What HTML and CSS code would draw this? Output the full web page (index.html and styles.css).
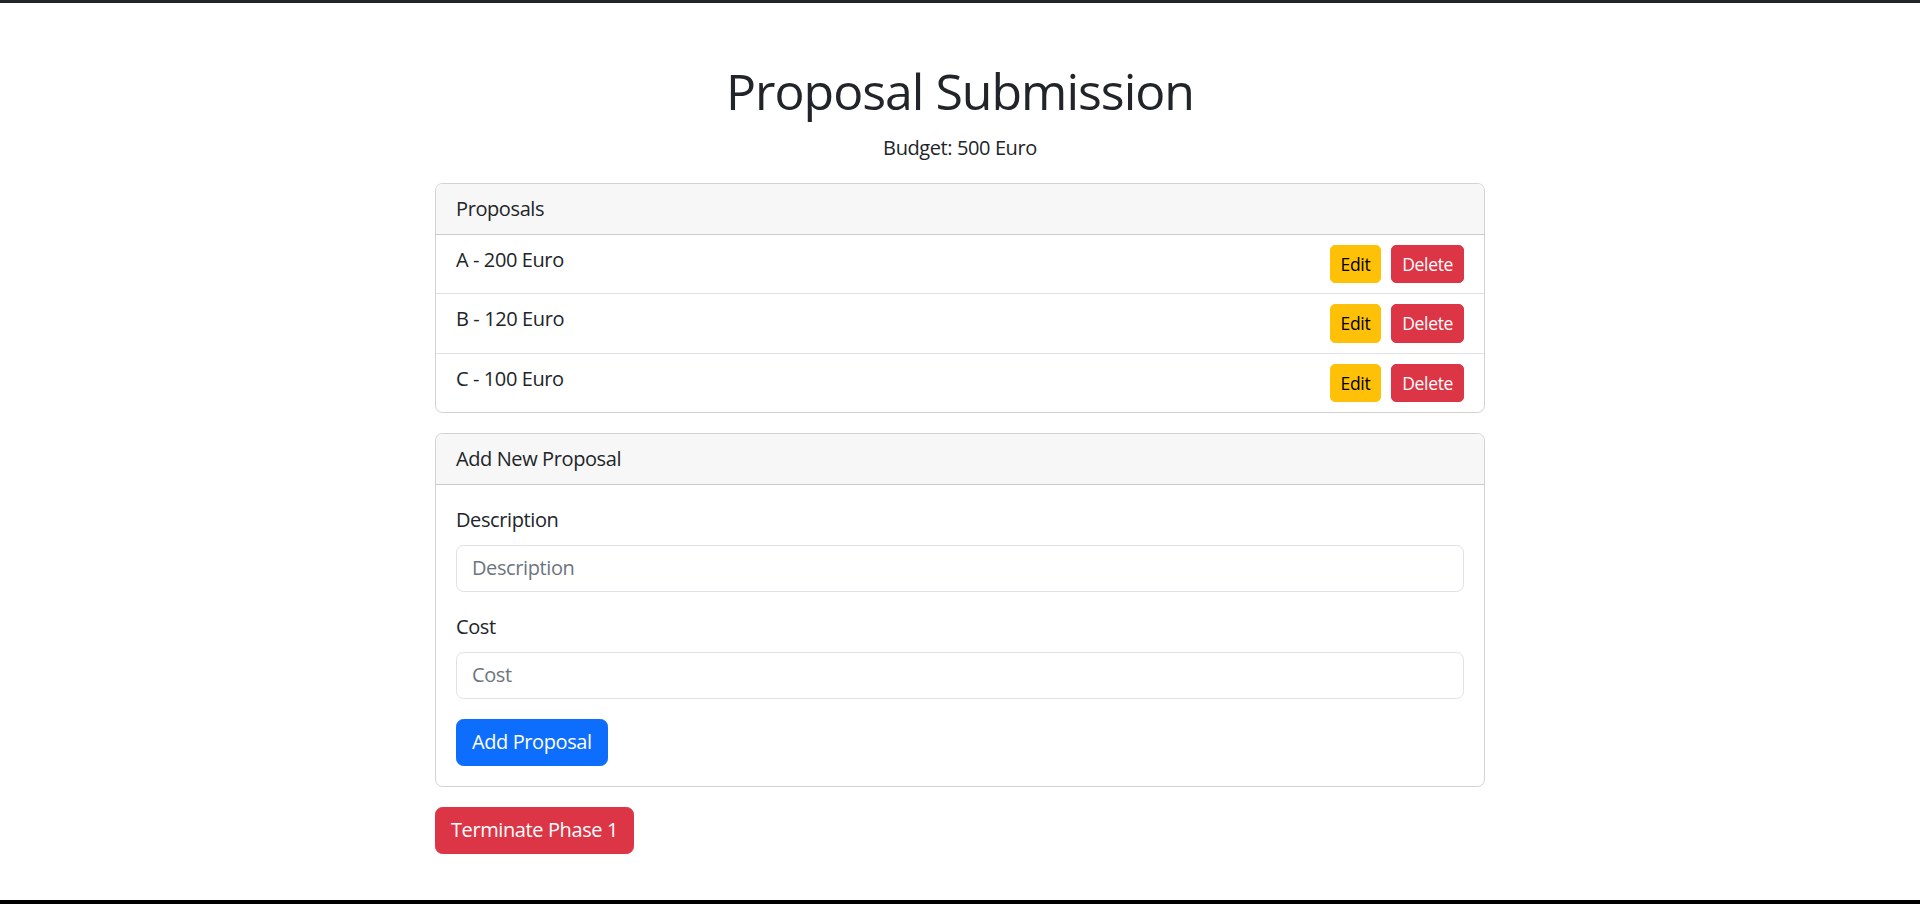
FILE: index.html
```html
<!DOCTYPE html>
<html lang="en">
<head>
<meta charset="utf-8">
<title>Proposal Submission</title>
<link rel="stylesheet" href="styles.css">
</head>
<body>
<main class="container">
  <h1 class="title">Proposal Submission</h1>
  <p class="budget">Budget: 500 Euro</p>

  <section class="card">
    <div class="card-header">Proposals</div>
    <ul class="list">
      <li class="list-item">
        <span>A - 200 Euro</span>
        <div class="actions">
          <button class="btn btn-sm btn-warning">Edit</button>
          <button class="btn btn-sm btn-danger">Delete</button>
        </div>
      </li>
      <li class="list-item">
        <span>B - 120 Euro</span>
        <div class="actions">
          <button class="btn btn-sm btn-warning">Edit</button>
          <button class="btn btn-sm btn-danger">Delete</button>
        </div>
      </li>
      <li class="list-item">
        <span>C - 100 Euro</span>
        <div class="actions">
          <button class="btn btn-sm btn-warning">Edit</button>
          <button class="btn btn-sm btn-danger">Delete</button>
        </div>
      </li>
    </ul>
  </section>

  <section class="card">
    <div class="card-header">Add New Proposal</div>
    <form class="card-body">
      <div class="field">
        <label class="label" for="desc">Description</label>
        <input class="input" id="desc" type="text" placeholder="Description">
      </div>
      <div class="field">
        <label class="label" for="cost">Cost</label>
        <input class="input" id="cost" type="text" placeholder="Cost">
      </div>
      <button type="button" class="btn btn-primary">Add Proposal</button>
    </form>
  </section>

  <button class="btn btn-danger">Terminate Phase 1</button>
</main>
</body>
</html>
```

FILE: styles.css
```css
html {
  margin: 0;
  min-height: 100vh;
  box-sizing: border-box;
  border-top: 3px solid #212529;
  border-bottom: 4px solid #000;
}
body {
  margin: 0;
  font-family: "Segoe UI", "Open Sans", "Noto Sans", sans-serif;
  font-size: 20px;
  line-height: 1.5;
  letter-spacing: -0.02em;
  color: #212529;
  background: #fff;
}
.container {
  width: 1050px;
  margin: 0 auto;
  padding-top: 58px;
}
.title {
  margin: 0 0 12px;
  font-size: 50px;
  font-weight: 500;
  line-height: 1.2;
  letter-spacing: -0.02em;
  text-align: center;
}
.budget {
  margin: 0 0 20px;
  text-align: center;
}
.card {
  border: 1px solid rgba(0, 0, 0, 0.175);
  border-radius: 7.5px;
  margin-bottom: 20px;
  overflow: hidden;
}
.card-header {
  padding: 10px 20px;
  background: #f7f7f7;
  border-bottom: 1px solid rgba(0, 0, 0, 0.175);
}
.list {
  list-style: none;
  margin: 0;
  padding: 0;
}
.list-item {
  display: flex;
  justify-content: space-between;
  padding: 10px 20px;
}
.list-item + .list-item {
  border-top: 1px solid #dee2e6;
}
.actions {
  display: flex;
  gap: 10px;
}
.btn {
  font-family: inherit;
  font-size: 20px;
  line-height: 1.5;
  letter-spacing: -0.02em;
  padding: 7.5px 15px;
  border: 1px solid transparent;
  border-radius: 7.5px;
  cursor: pointer;
}
.btn-sm {
  font-size: 17.5px;
  padding: 5px 10px;
  border-radius: 5px;
}
.btn-warning {
  background: #ffc107;
  border-color: #ffc107;
  color: #000;
}
.btn-danger {
  background: #dc3545;
  border-color: #dc3545;
  color: #fff;
}
.btn-primary {
  background: #0d6efd;
  border-color: #0d6efd;
  color: #fff;
}
.card-body {
  padding: 20px;
  margin: 0;
}
.field {
  margin-bottom: 20px;
}
.label {
  display: block;
  margin-bottom: 10px;
}
.input {
  display: block;
  box-sizing: border-box;
  width: 100%;
  font-family: inherit;
  font-size: 20px;
  line-height: 1.5;
  letter-spacing: -0.02em;
  padding: 7.5px 15px;
  border: 1px solid #dee2e6;
  border-radius: 7.5px;
  color: #212529;
  background: #fff;
}
.input::placeholder {
  color: #6c757d;
}
```
